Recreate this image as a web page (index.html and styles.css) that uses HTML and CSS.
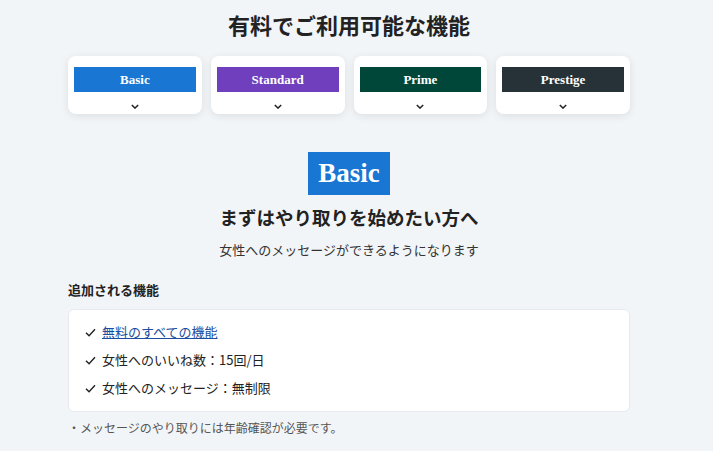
FILE: index.html
```html
<!DOCTYPE html>
<html lang="ja">
<head>
  <meta charset="UTF-8">
  <title>有料でご利用可能な機能</title>
  <link rel="stylesheet" href="styles.css">
</head>
<body>
  <div class="page">
    <h1 class="title">有料でご利用可能な機能</h1>

    <div class="plans">
      <div class="plan">
        <div class="plan-name basic">Basic</div>
        <svg class="chev" viewBox="0 0 10 6"><path d="M1 1l4 4 4-4" /></svg>
      </div>
      <div class="plan">
        <div class="plan-name standard">Standard</div>
        <svg class="chev" viewBox="0 0 10 6"><path d="M1 1l4 4 4-4" /></svg>
      </div>
      <div class="plan">
        <div class="plan-name prime">Prime</div>
        <svg class="chev" viewBox="0 0 10 6"><path d="M1 1l4 4 4-4" /></svg>
      </div>
      <div class="plan">
        <div class="plan-name prestige">Prestige</div>
        <svg class="chev" viewBox="0 0 10 6"><path d="M1 1l4 4 4-4" /></svg>
      </div>
    </div>

    <div class="detail">
      <div class="badge basic">Basic</div>
      <h2 class="lead">まずはやり取りを始めたい方へ</h2>
      <p class="sub">女性へのメッセージができるようになります</p>
    </div>

    <h3 class="section">追加される機能</h3>
    <ul class="features">
      <li><svg class="check" viewBox="0 0 12 10"><path d="M1 5.2l3.4 3.4L11 1.5" /></svg><a href="#">無料のすべての機能</a></li>
      <li><svg class="check" viewBox="0 0 12 10"><path d="M1 5.2l3.4 3.4L11 1.5" /></svg>女性へのいいね数：15回/日</li>
      <li><svg class="check" viewBox="0 0 12 10"><path d="M1 5.2l3.4 3.4L11 1.5" /></svg>女性へのメッセージ：無制限</li>
    </ul>
    <p class="note">・メッセージのやり取りには年齢確認が必要です。</p>
  </div>
</body>
</html>
```

FILE: styles.css
```css
body {
  margin: 0;
  background: #f2f5f8;
  font-family: "Noto Sans CJK JP", "Noto Sans", sans-serif;
  color: #222;
}

.page {
  width: 562px;
  margin-left: 68px;
}

.title {
  margin: 0;
  padding-top: 8px;
  height: 56px;
  box-sizing: border-box;
  text-align: center;
  font-size: 22px;
  line-height: 32px;
  font-weight: 700;
  color: #222;
}

.plans {
  display: grid;
  grid-template-columns: repeat(4, 1fr);
  gap: 9px;
}

.plan {
  background: #fff;
  border-radius: 8px;
  box-shadow: 0 2px 8px rgba(0, 0, 0, 0.09);
  padding: 11px 6px 0;
  height: 58px;
  box-sizing: border-box;
  display: flex;
  flex-direction: column;
  align-items: center;
}

.plan-name {
  width: 100%;
  height: 25px;
  line-height: 25px;
  text-align: center;
  color: #fff;
  font-family: "Liberation Serif", "DejaVu Serif", serif;
  font-weight: 700;
  font-size: 13px;
}

.basic { background: #1976d2; }
.standard { background: #6f3fbd; }
.prime { background: #00473a; }
.prestige { background: #263238; }

.chev {
  width: 8px;
  height: 5px;
  margin-top: 12px;
  fill: none;
  stroke: #222;
  stroke-width: 1.8;
}

.detail {
  margin-top: 38px;
  text-align: center;
}

.badge {
  display: inline-block;
  width: 82px;
  height: 43px;
  line-height: 43px;
  color: #fff;
  font-family: "Liberation Serif", "DejaVu Serif", serif;
  font-weight: 700;
  font-size: 27px;
}

.lead {
  margin: 9px 0 0;
  font-size: 18.5px;
  line-height: 26px;
  font-weight: 700;
}

.sub {
  margin: 10px 0 0;
  font-size: 13px;
  line-height: 20px;
  color: #333;
}

.section {
  margin: 20px 0 0;
  font-size: 13px;
  line-height: 20px;
  font-weight: 700;
}

.features {
  list-style: none;
  margin: 9px 0 0;
  padding: 8px 16px 9px;
  background: #fff;
  border: 1px solid #e6eaee;
  border-radius: 6px;
}

.features li {
  display: flex;
  align-items: center;
  font-size: 13px;
  line-height: 28px;
  color: #222;
}

.check {
  width: 11px;
  height: 9px;
  margin-right: 6px;
  fill: none;
  stroke: #222;
  stroke-width: 1.6;
}

.features a {
  color: #1a4da0;
}

.note {
  margin: 7px 0 0;
  font-size: 12px;
  color: #555;
}
```
